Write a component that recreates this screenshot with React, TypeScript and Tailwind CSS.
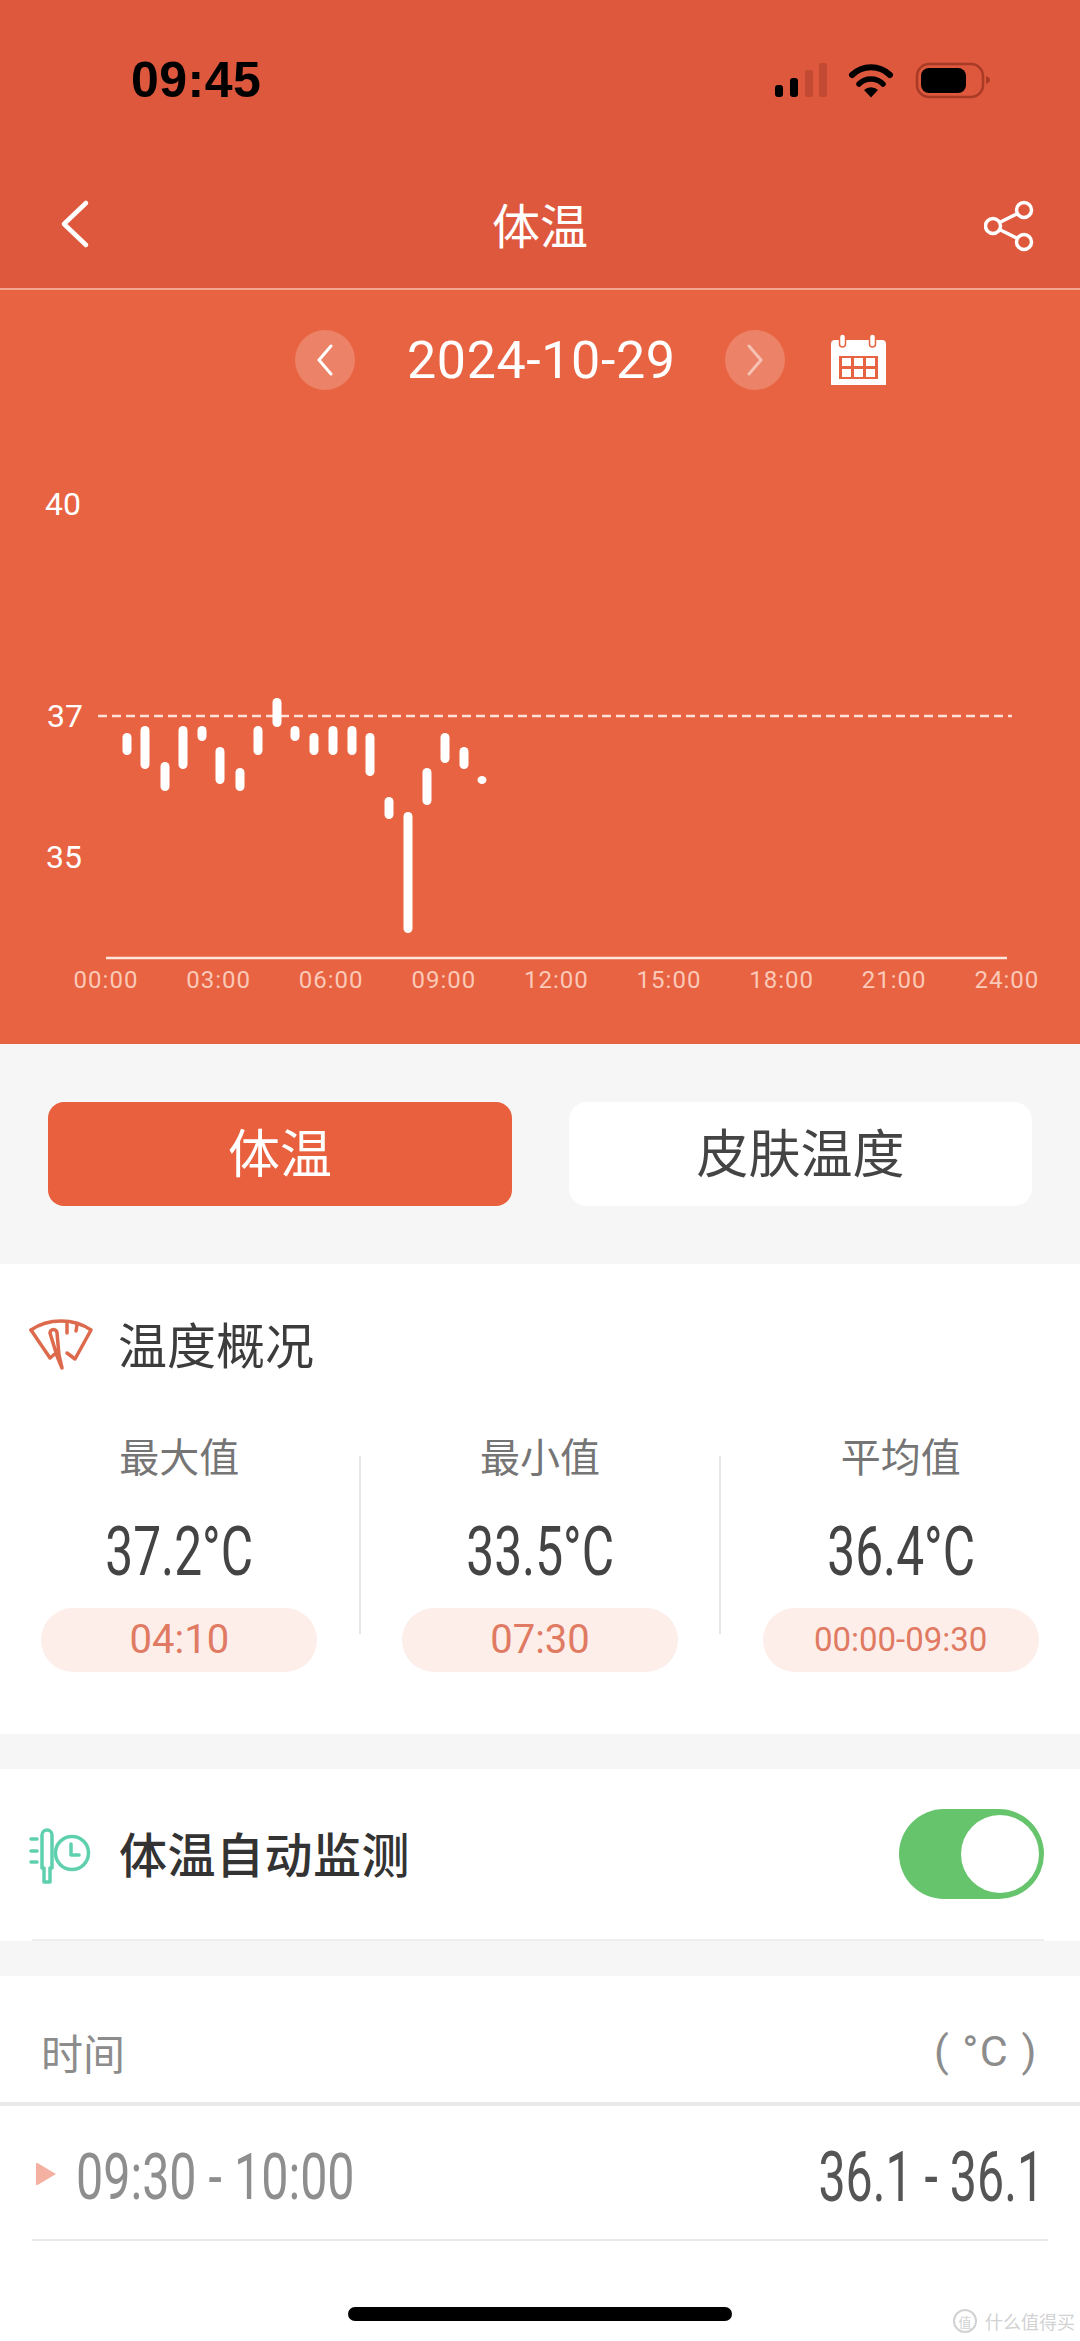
const CJK = "font-['Noto_Sans_CJK_SC','Noto_Sans',sans-serif]";
const NUM = "font-['Roboto','Noto_Sans_CJK_SC',sans-serif]";

// [centre x, top, bottom] in page pixels
const BARS = [
  [127, 733, 755], [145, 726, 769], [165, 762, 791], [183, 726, 769], [202, 726, 741],
  [220, 747, 784], [240, 768, 791], [258, 726, 755], [277, 698, 727], [295, 726, 741],
  [314, 733, 755], [333, 726, 755], [352, 726, 755], [370, 733, 776], [389, 797, 819],
  [408, 812, 933], [427, 768, 805], [445, 733, 763], [464, 747, 769], [482, 776, 784],
];

const HOURS = ["00:00", "03:00", "06:00", "09:00", "12:00", "15:00", "18:00", "21:00", "24:00"];

const STATS = [
  { label: "最大值", value: "37.2°C", time: "04:10", timeClass: "text-[40px]" },
  { label: "最小值", value: "33.5°C", time: "07:30", timeClass: "text-[40px]" },
  { label: "平均值", value: "36.4°C", time: "00:00-09:30", timeClass: "text-[33px]" },
];

function StatusIcons() {
  return (
    <svg width="235" height="50" viewBox="0 0 235 50" className="block">
      <rect x="10" y="30" width="8" height="12" rx="3" fill="#000" />
      <rect x="25" y="23" width="8" height="19" rx="3" fill="#000" />
      <rect x="40" y="15" width="8" height="27" rx="2" fill="#c24a33" />
      <rect x="54" y="8" width="8" height="34" rx="2" fill="#c24a33" />
      <path d="M87 20a27 27 0 0 1 38 0" fill="none" stroke="#000" strokeWidth="6" strokeLinecap="round" />
      <path d="M94 29a17 17 0 0 1 24 0" fill="none" stroke="#000" strokeWidth="5.5" strokeLinecap="round" />
      <path d="M99 35a10 10 0 0 1 14 0l-7 7.500z" fill="#000" />
      <rect x="152" y="9" width="66" height="33" rx="12" fill="none" stroke="#a93a25" strokeWidth="2.500" />
      <rect x="156" y="13" width="45" height="25" rx="8" fill="#000" />
      <path d="M221 21c3 1 4 3 4 4s-1 3-4 4z" fill="#a93a25" />
    </svg>
  );
}

function ShareIcon() {
  return (
    <svg width="52" height="52" viewBox="0 0 52 52" fill="none" stroke="#fff" strokeWidth="3.500" className="mt-[6px]">
      <circle cx="40" cy="10" r="7.500" />
      <circle cx="9" cy="26" r="7.500" />
      <circle cx="40" cy="42" r="7.500" />
      <path d="M15.500 22.500 33.500 13.500M15.500 29.500 33.500 38.500" />
    </svg>
  );
}

function CalendarIcon() {
  return (
    <svg width="75" height="70" viewBox="0 0 75 70">
      <path d="M11 19a4 4 0 0 1 4-4h47a4 4 0 0 1 4 4v41H11z" fill="#fff" />
      <rect x="19" y="31" width="39" height="23" fill="#e86341" />
      <rect x="19.500" y="9" width="6" height="13" rx="3" fill="#fff" stroke="#e86341" strokeWidth="1.500" />
      <rect x="49.500" y="9" width="6" height="13" rx="3" fill="#fff" stroke="#e86341" strokeWidth="1.500" />
      <g fill="#fff">
        <rect x="22" y="33" width="9" height="8" />
        <rect x="34" y="33" width="9" height="8" />
        <rect x="46" y="33" width="9" height="8" />
        <rect x="22" y="44" width="9" height="8" />
        <rect x="34" y="44" width="9" height="8" />
        <rect x="46" y="44" width="9" height="8" />
      </g>
    </svg>
  );
}

function GaugeIcon() {
  return (
    <svg width="80" height="70" viewBox="0 0 80 70" fill="none" stroke="#dd6a4c" strokeWidth="3.500" strokeLinecap="round" strokeLinejoin="round">
      <path d="M10 21C27 9 53 9 70 21L54 50 46 44" />
      <path d="M10 21 29 49 35 44" />
      <path d="M29 24a3.500 3.500 0 0 1 7 0l2 22 3 13-5-12z" />
      <path d="M46 15v9M56 16l-1 6" />
    </svg>
  );
}

function MonitorIcon() {
  return (
    <svg width="80" height="70" viewBox="0 0 80 70" fill="none" stroke="#5fd0ae" strokeLinecap="round" strokeLinejoin="round">
      <path d="M22 16a5 5 0 0 1 10 0v33h-2v14h-6v-14h-2z" strokeWidth="3.500" fill="#fff" />
      <path d="M11 20h6M11 32h6M11 43h6" strokeWidth="3.500" />
      <circle cx="52" cy="34" r="16.500" strokeWidth="3.500" />
      <path d="M51 25v11h8" strokeWidth="3.500" />
    </svg>
  );
}

function Stat({ label, value, time, timeClass }: (typeof STATS)[number]) {
  return (
    <div className="flex flex-1 flex-col items-center">
      <div className={`h-[60px] text-[40px] leading-[60px] text-[#757575] ${CJK}`}>{label}</div>
      <div className={`mt-[32px] h-[70px] origin-center scale-x-[0.73] text-[68px] leading-[70px] font-normal whitespace-nowrap text-[#444] ${NUM}`}>
        {value}
      </div>
      <div className={`mt-[21px] flex h-[64px] w-[276px] items-center justify-center rounded-full bg-[#fdeeea] text-[#e07a62] ${timeClass} ${NUM}`}>
        {time}
      </div>
    </div>
  );
}

export default function App() {
  return (
    <div className={`relative h-[2341px] w-[1080px] overflow-hidden bg-[#f6f6f6] ${CJK}`}>
      {/* Header */}
      <header className="h-[290px] border-b-2 border-[#f3a594] bg-[#de583e]">
        <div className="flex h-[160px] items-start justify-between pt-[55px] pr-[80px] pl-[131px]">
          <span className="text-[50px] leading-[50px] font-bold tracking-[0.5px] text-black font-['Liberation_Sans',sans-serif]">09:45</span>
          <StatusIcons />
        </div>
        <div className="flex h-[128px] items-start justify-between pt-[34px] pr-[44px] pl-[56px]">
          <svg width="40" height="52" viewBox="0 0 40 52" fill="none" stroke="#fff" strokeWidth="4.500" strokeLinecap="round" strokeLinejoin="round" className="mt-[3px]">
            <path d="M30 6 8 27l22 21" />
          </svg>
          <span className="-mt-[3px] text-[48px] leading-[64px] text-white">体温</span>
          <ShareIcon />
        </div>
      </header>

      {/* Chart panel */}
      <section className="h-[754px] bg-[#e86341]">
        <div className="flex h-[140px] items-center pl-[295px]">
          <div className="flex h-[60px] w-[60px] items-center justify-center rounded-full bg-white/20">
            <svg width="24" height="36" viewBox="0 0 24 36" fill="none" stroke="#fff" strokeWidth="3" strokeLinecap="round">
              <path d="M18 4 6 18l12 14" />
            </svg>
          </div>
          <span className={`mt-[2px] ml-[52px] w-[318px] text-[52px] font-normal tracking-[0.6px] text-white ${NUM}`}>2024-10-29</span>
          <div className="flex h-[60px] w-[60px] items-center justify-center rounded-full bg-white/20">
            <svg width="24" height="36" viewBox="0 0 24 36" fill="none" stroke="#ffffff80" strokeWidth="3" strokeLinecap="round">
              <path d="m6 4 12 14L6 32" />
            </svg>
          </div>
          <div className="ml-[35px]">
            <CalendarIcon />
          </div>
        </div>
        <svg width="1080" height="614" viewBox="0 430 1080 614" className="block">
          <g fontFamily="Roboto, sans-serif" fontSize="32" fill="#fff">
            <text x="45" y="515">40</text>
            <text x="47" y="727">37</text>
            <text x="46" y="868">35</text>
          </g>
          <line x1="98" y1="716" x2="1012" y2="716" stroke="#fde0d6" strokeWidth="2.500" strokeDasharray="9 5" />
          {BARS.map(([x, top, bottom]) => (
            <rect key={x} x={x - 4.5} y={top} width="9" height={bottom - top} rx="4.5" fill="#fff" />
          ))}
          <line x1="106" y1="958" x2="1007" y2="958" stroke="#fde6dc" strokeWidth="2.500" />
          <g fontFamily="Roboto, sans-serif" fontSize="24" letterSpacing="1" fill="#fbc9b8" textAnchor="middle">
            {HOURS.map((h, i) => (
              <text key={h} x={106 + i * 112.6} y="988">{h}</text>
            ))}
          </g>
        </svg>
      </section>

      {/* Tabs */}
      <div className="flex h-[220px] items-start justify-between pt-[58px] pr-[48px] pl-[48px]">
        <button className="h-[104px] w-[464px] rounded-[16px] bg-[#e8603d] pb-[6px] text-[52px] text-white">体温</button>
        <button className="h-[104px] w-[463px] rounded-[18px] bg-white pb-[6px] text-[52px] text-[#444]">皮肤温度</button>
      </div>

      {/* Overview */}
      <section className="h-[470px] bg-white">
        <div className="flex h-[161px] items-start pt-[45px] pl-[21px]">
          <GaugeIcon />
          <span className="-mt-[2px] ml-[17px] text-[49px] leading-[72px] text-[#3c3c3c]">温度概况</span>
        </div>
        <div className="flex">
          <Stat {...STATS[0]} />
          <div className="mt-[31px] h-[178px] w-[2px] bg-[#e6e6e6]" />
          <Stat {...STATS[1]} />
          <div className="mt-[31px] h-[178px] w-[2px] bg-[#e6e6e6]" />
          <Stat {...STATS[2]} />
        </div>
      </section>

      {/* Auto monitor toggle */}
      <section className="mt-[35px] h-[172px] bg-white">
        <div className="mx-[32px] mr-[36px] flex h-[172px] items-center justify-between border-b-2 border-[#eeeeee]">
          <div className="-ml-[12px] flex items-center">
            <MonitorIcon />
            <span className="-mt-[5px] ml-[19px] text-[48px] font-medium tracking-[0.5px] text-[#333]">体温自动监测</span>
          </div>
          <div className="flex h-[90px] w-[145px] items-center justify-end rounded-full bg-[#66c46c] pr-[5px]">
            <div className="h-[78px] w-[78px] rounded-full bg-white" />
          </div>
        </div>
      </section>

      {/* Records */}
      <section className="mt-[35px] h-[365px] bg-white">
        <div className="flex h-[130px] items-center justify-between border-b-4 border-[#e9e9e9] pt-[24px] pr-[42px] pl-[41px]">
          <span className="text-[42px] text-[#8c8c8c]">时间</span>
          <span className={`text-[43px] tracking-[1.5px] whitespace-pre text-[#8c8c8c] ${NUM}`}>( °C )</span>
        </div>
        <div className="mx-[32px] flex h-[135px] items-center justify-between border-b-2 border-[#e9e9e9] pt-[10px]">
          <div className="flex items-center">
            <svg width="22" height="24" viewBox="0 0 22 24" className="-mt-[8px] ml-[3px]">
              <path d="M1 2a1 1 0 0 1 1.500-1L21 12 2.500 23A1 1 0 0 1 1 22z" fill="#f4b0a0" />
            </svg>
            <span className={`ml-[19px] origin-left scale-x-[0.745] text-[65px] whitespace-nowrap text-[#8e8e8e] ${NUM}`}>09:30 - 10:00</span>
          </div>
          <span className={`mr-[4px] origin-right scale-x-[0.69] text-[70px] whitespace-nowrap text-[#555] ${NUM}`}>36.1 - 36.1</span>
        </div>
      </section>

      {/* Home indicator + watermark */}
      <div className="absolute top-[2307px] left-[348px] h-[14px] w-[384px] rounded-full bg-black" />
      <div className="absolute top-[2309px] left-[953px] flex items-center text-[#d2d2d2]">
        <span className="flex h-[24px] w-[24px] items-center justify-center rounded-full border-2 border-[#d2d2d2] text-[13px] leading-none">值</span>
        <span className="ml-[8px] text-[18px] leading-[24px]">什么值得买</span>
      </div>
    </div>
  );
}
